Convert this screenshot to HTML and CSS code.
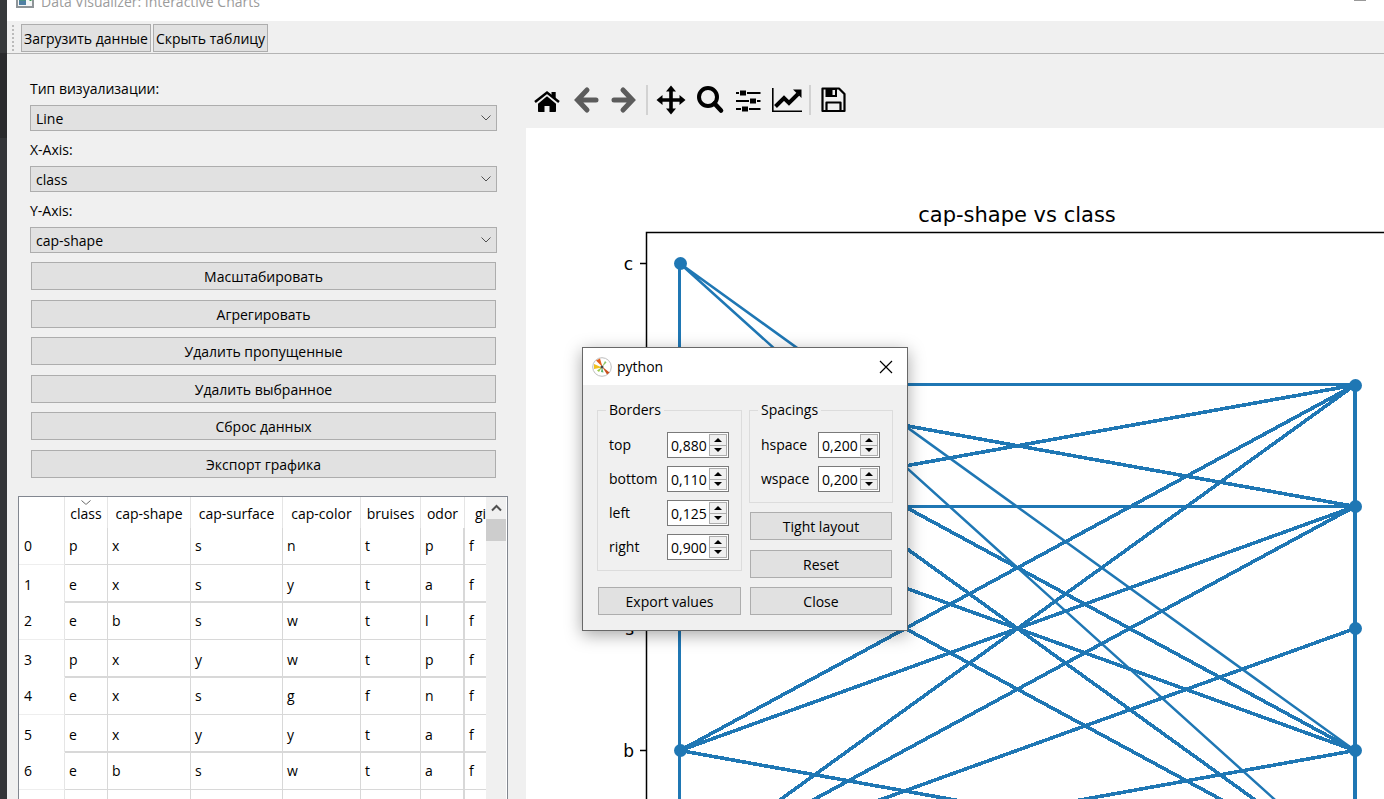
FILE: index.html
```html
<!DOCTYPE html>
<html lang="ru">
<head>
<meta charset="utf-8">
<title>Data Visualizer: Interactive Charts</title>
<link rel="stylesheet" href="styles.css">
</head>
<body>
<div class="window">
  <header class="titlebar">
    <svg class="app-icon" width="18" height="18" viewBox="0 0 18 18" aria-hidden="true"><rect x="1" y="1" width="16" height="15" fill="#f4f6f7" stroke="#8e9498" stroke-width="2"/><rect x="3" y="4" width="7" height="10" fill="#4b8f86"/><rect x="3" y="10" width="7" height="4" fill="#4f7fa3"/><path d="M14.500 5v5" stroke="#3c9a55" stroke-width="2"/></svg>
    <span class="title">Data Visualizer: Interactive Charts</span>
    <span class="minimize"></span>
  </header>
  <div class="toolbar">
    <span class="handle"></span>
    <button class="tool" type="button">Загрузить данные</button>
    <button class="tool" type="button">Скрыть таблицу</button>
  </div>
  <main class="content">
    <section class="side">
      <form class="controls">
        <label for="kind">Тип визуализации:</label>
        <div class="combo"><select id="kind"><option>Line</option></select><svg width="12" height="8" viewBox="0 0 12 8"><path d="M1.5 1.5L6 6l4.500-4.500"/></svg></div>
        <label for="xaxis">X-Axis:</label>
        <div class="combo"><select id="xaxis"><option>class</option></select><svg width="12" height="8" viewBox="0 0 12 8"><path d="M1.5 1.5L6 6l4.500-4.500"/></svg></div>
        <label for="yaxis">Y-Axis:</label>
        <div class="combo"><select id="yaxis"><option>cap-shape</option></select><svg width="12" height="8" viewBox="0 0 12 8"><path d="M1.5 1.5L6 6l4.500-4.500"/></svg></div>
        <div class="actions">
          <button class="push" type="button">Масштабировать</button>
          <button class="push" type="button">Агрегировать</button>
          <button class="push" type="button">Удалить пропущенные</button>
          <button class="push" type="button">Удалить выбранное</button>
          <button class="push" type="button">Сброс данных</button>
          <button class="push" type="button">Экспорт графика</button>
        </div>
      </form>
      <div class="grid-frame">
        <div class="grid-view">
          <table class="data">
            <colgroup><col class="c-index"><col class="c-class"><col class="c-shape"><col class="c-surface"><col class="c-color"><col class="c-bruises"><col class="c-odor"><col class="c-gill"></colgroup>
            <thead><tr><th></th><th><svg class="sort" width="10" height="5" viewBox="0 0 10 5"><path d="M.5.5l4 3.500h1l4-3.500"/></svg>class</th><th>cap-shape</th><th>cap-surface</th><th>cap-color</th><th>bruises</th><th>odor</th><th>gill-attachment</th></tr></thead>
            <tbody>
              <tr><th>0</th><td>p</td><td>x</td><td>s</td><td>n</td><td>t</td><td>p</td><td>f</td></tr>
              <tr><th>1</th><td>e</td><td>x</td><td>s</td><td>y</td><td>t</td><td>a</td><td>f</td></tr>
              <tr><th>2</th><td>e</td><td>b</td><td>s</td><td>w</td><td>t</td><td>l</td><td>f</td></tr>
              <tr><th>3</th><td>p</td><td>x</td><td>y</td><td>w</td><td>t</td><td>p</td><td>f</td></tr>
              <tr><th>4</th><td>e</td><td>x</td><td>s</td><td>g</td><td>f</td><td>n</td><td>f</td></tr>
              <tr><th>5</th><td>e</td><td>x</td><td>y</td><td>y</td><td>t</td><td>a</td><td>f</td></tr>
              <tr><th>6</th><td>e</td><td>b</td><td>s</td><td>w</td><td>t</td><td>a</td><td>f</td></tr>
              <tr><th></th><td></td><td></td><td></td><td></td><td></td><td></td><td></td></tr>
            </tbody>
          </table>
        </div>
        <div class="scrollbar">
          <button class="scroll-up" type="button" aria-label="Scroll up"><svg width="11" height="8" viewBox="0 0 11 8"><path d="M1 6.500l4.500-4.500 4.500 4.500" fill="none" stroke="#505050" stroke-width="2"/></svg></button>
          <div class="thumb"></div>
        </div>
      </div>
    </section>
    <section class="plot">
      <div class="nav">
        <button type="button" aria-label="Home"><svg width="32" height="32" viewBox="0 0 32 32"><path d="M4 18L16 8.500l12 9.500" fill="none" stroke="#000" stroke-width="2.500"/><path d="M20.500 8h4.200v7l-4.200-3.500z"/><path d="M16 12.300l9 7.500V27c0 .6-.4 1-1 1h-5.500v-6h-5v6H8c-.6 0-1-.4-1-1v-7.200z"/></svg></button>
        <button type="button" aria-label="Back"><svg width="32" height="32" viewBox="0 0 32 32"><path d="M17 6L7.500 16 17 26M8 16h18" fill="none" stroke="#5c5c5c" stroke-width="5" stroke-linecap="round"/></svg></button>
        <button type="button" aria-label="Forward"><svg width="32" height="32" viewBox="0 0 32 32"><path d="M14 6L23.500 16 14 26M23 16H5" fill="none" stroke="#5c5c5c" stroke-width="5" stroke-linecap="round"/></svg></button>
        <span class="divider"></span>
        <button type="button" aria-label="Pan"><svg width="32" height="32" viewBox="0 0 32 32"><path d="M16 5v22M5 16h22" stroke="#000" stroke-width="3.600"/><path d="M16 1.500l5 6H11zM16 30.500l5-6H11zM1.500 16l6-5v10zM30.500 16l-6-5v10z"/></svg></button>
        <button type="button" aria-label="Zoom"><svg width="32" height="32" viewBox="0 0 32 32"><circle cx="14" cy="13" r="9" fill="none" stroke="#000" stroke-width="4"/><path d="M20.500 19.500l6.500 7" stroke="#000" stroke-width="4.600" stroke-linecap="round"/></svg></button>
        <button type="button" aria-label="Subplots"><svg width="32" height="32" viewBox="0 0 32 32"><path d="M3 9h24.500M3 17h24.500M3 25h24.500" stroke="#000" stroke-width="2.200"/><path d="M6.500 6h7v6h-7zM16.500 14h7v6h-7zM8.500 22h7v6h-7z" stroke="#f0f0f0" stroke-width="1"/></svg></button>
        <button type="button" aria-label="Edit axes"><svg width="32" height="32" viewBox="0 0 32 32"><path d="M.8 4v23.200H30" fill="none" stroke="#000" stroke-width="1.600"/><path d="M3.500 22.500l8.500-8.500 5 5 9-9" fill="none" stroke="#000" stroke-width="4"/><path d="M29.500 5.500v8.500L21 5.500z"/></svg></button>
        <span class="divider"></span>
        <button type="button" aria-label="Save"><svg width="32" height="32" viewBox="0 0 32 32"><path d="M4.500 4.500H21l5.500 5.500v17h-22zM8.500 27v-8.500h14V27" fill="none" stroke="#000" stroke-width="2.200" stroke-linejoin="round"/><path d="M7.500 4h11.500v9H7.500z"/><path d="M14.500 6h2.500v5h-2.500z" fill="#f0f0f0"/></svg></button>
      </div>
      <svg class="figure" viewBox="0 0 858 671" preserveAspectRatio="xMinYMin slice" role="img" aria-label="cap-shape vs class">
        <text class="fig-title" x="491" y="94" text-anchor="middle">cap-shape vs class</text>
        <g class="fig-tick" text-anchor="end">
          <text x="107" y="142">c</text><text x="108" y="507">s</text><text x="108" y="629">b</text>
        </g>
        <path class="axes" d="M114 135.500h6M114 257.500h6M114 378.500h6M114 500.500h6M114 622.500h6M120.500 680V104.500H900"/>
        <g class="thin">
          <path d="M154 135.500L829 622.500M154 135.500L829 744"/>
        </g>
        <g class="straight">
          <path d="M153.500 135.500V744M154 256.500H829M154 378.500H829"/>
        </g>
        <g class="thick">
          <path d="M829 257V744M154 257L829 378.500M154 378.500L829 257M154 257L829 622.500M154 257L829 744M154 378.500L829 622.500M154 378.500L829 744M154 622.500L829 257M154 622.500L829 378.500M154 744L829 257M154 744L829 378.500M154 744L829 500.500M154 622.500L829 744M154 744L829 622.500"/>
        </g>
        <g class="markers">
          <circle cx="154.500" cy="135.500" r="6.500"/><circle cx="154.500" cy="257.500" r="6.500"/><circle cx="154.500" cy="378.500" r="6.500"/><circle cx="154.500" cy="622.500" r="6.500"/>
          <circle cx="829.500" cy="257.500" r="6.500"/><circle cx="829.500" cy="378.500" r="6.500"/><circle cx="829.500" cy="500.500" r="6.500"/><circle cx="829.500" cy="622.500" r="6.500"/>
        </g>
      </svg>
    </section>
  </main>
</div>

<div class="dialog" role="dialog" aria-labelledby="dialog-title">
  <div class="dialog-bar">
    <svg width="20" height="20" viewBox="0 0 20 20" aria-hidden="true"><circle cx="10" cy="10" r="9.300" fill="#fff" stroke="#bdbdbd"/><path d="M10.500 10L4 3.500l4-2z" fill="#e2601c"/><path d="M10 10.500L2 12V7z" fill="#f0c020"/><path d="M10 9.500l7.500 6-2.500 2z" fill="#c9501e"/><path d="M10 10l3-6 1.500 1.500z" fill="#8cc466"/><path d="M10 10l-3 5-2-1.500z" fill="#9ac845"/><path d="M10 10l-1 5 2.500.5z" fill="#57b46b"/><circle cx="10" cy="10" r="1.500" fill="#444"/></svg>
    <span id="dialog-title">python</span>
    <button class="close" type="button" aria-label="Close window"><svg width="14" height="14" viewBox="0 0 14 14"><path d="M1 1l12 12M13 1L1 13" stroke="#000" stroke-width="1.200"/></svg></button>
  </div>
  <form class="dialog-body">
    <div class="column">
      <fieldset><legend>Borders</legend>
        <div class="field"><label for="top">top</label><div class="spin"><input id="top" type="text" value="0,880"><span class="steps"><button type="button" aria-label="Increase top"><i class="up"></i></button><button type="button" aria-label="Decrease top"><i class="down"></i></button></span></div></div>
        <div class="field"><label for="bottom">bottom</label><div class="spin"><input id="bottom" type="text" value="0,110"><span class="steps"><button type="button" aria-label="Increase bottom"><i class="up"></i></button><button type="button" aria-label="Decrease bottom"><i class="down"></i></button></span></div></div>
        <div class="field"><label for="left">left</label><div class="spin"><input id="left" type="text" value="0,125"><span class="steps"><button type="button" aria-label="Increase left"><i class="up"></i></button><button type="button" aria-label="Decrease left"><i class="down"></i></button></span></div></div>
        <div class="field"><label for="right">right</label><div class="spin"><input id="right" type="text" value="0,900"><span class="steps"><button type="button" aria-label="Increase right"><i class="up"></i></button><button type="button" aria-label="Decrease right"><i class="down"></i></button></span></div></div>
      </fieldset>
      <button class="push" type="button">Export values</button>
    </div>
    <div class="column">
      <fieldset><legend>Spacings</legend>
        <div class="field"><label for="hspace">hspace</label><div class="spin"><input id="hspace" type="text" value="0,200"><span class="steps"><button type="button" aria-label="Increase hspace"><i class="up"></i></button><button type="button" aria-label="Decrease hspace"><i class="down"></i></button></span></div></div>
        <div class="field"><label for="wspace">wspace</label><div class="spin"><input id="wspace" type="text" value="0,200"><span class="steps"><button type="button" aria-label="Increase wspace"><i class="up"></i></button><button type="button" aria-label="Decrease wspace"><i class="down"></i></button></span></div></div>
      </fieldset>
      <button class="push" type="button">Tight layout</button>
      <button class="push" type="button">Reset</button>
      <button class="push" type="button">Close</button>
    </div>
  </form>
</div>
</body>
</html>
```
FILE: styles.css
```css
* { box-sizing: border-box; }

body {
  margin: 0;
  height: 100vh;
  overflow: hidden;
  padding-left: 7px;
  background: linear-gradient(#37393b 0 53px, #2a2b2d 53px 138px, #333538 138px);
  color: #000;
  font: 14px/20px "Open Sans", "Noto Sans", sans-serif;
}

button, input, select { margin: 0; font: inherit; color: inherit; }

.window { display: flex; flex-direction: column; height: 100%; overflow: hidden; background: #f0f0f0; }

/* Title bar and main toolbar */
.titlebar { display: flex; flex: none; gap: 7px; height: 21px; padding: 0 18px 0 9px; overflow: hidden; background: #fff; color: #9b9b9b; }
.titlebar .title { margin-top: -8px; }
.titlebar .app-icon { flex: none; margin-top: -9px; }
.minimize { width: 12px; height: 1px; margin-left: auto; background: #999; }

.toolbar { display: flex; flex: none; gap: 2px; padding: 3px 5px 1px; border-bottom: 1px solid #b4b4b4; }
.handle { width: 2px; margin: 1px 5px 1px 0; background: repeating-linear-gradient(#bbb 0 2px, transparent 2px 4px); }
.tool { height: 28px; padding: 1px 2px 0; border: 1px solid #adadad; background: #e1e1e1; white-space: nowrap; }

.content { display: grid; flex: 1; grid-template-columns: minmax(420px, 519fr) minmax(0, 858fr); min-height: 0; }

/* Left panel */
.side { display: flex; flex-direction: column; min-height: 0; padding: 25px 18px 0 11px; }
.controls { display: flex; flex: none; flex-direction: column; padding: 0 11px 0 12px; }
.controls label { margin-bottom: 6px; }
.combo { display: grid; align-items: center; margin-bottom: 9px; }
.combo select, .combo svg { grid-area: 1 / 1; }
.combo select { appearance: none; width: 100%; height: 26px; padding: 2px 5px 0; border: 1px solid #adadad; border-radius: 0; background: #e1e1e1; }
.combo svg { justify-self: end; margin-right: 5px; pointer-events: none; fill: none; stroke: #505050; }
.actions { display: flex; flex-direction: column; padding: 0 1px; }
.actions .push:nth-child(odd) { margin-bottom: 10px; }
.actions .push:nth-child(even) { margin-bottom: 9px; }
.push { height: 28px; padding: 2px 0 0; border: 1px solid #adadad; background: #e1e1e1; }

.grid-frame { display: flex; flex: 1; min-height: 0; margin-top: 9px; border: 1px solid #828790; border-bottom: 0; background: #fff; }
.grid-view { flex: 1; min-width: 0; overflow: hidden; }
.data { table-layout: fixed; width: 565px; border-collapse: separate; border-spacing: 0; }
.c-index { width: 46px; }
.c-class { width: 43px; }
.c-shape { width: 83px; }
.c-surface { width: 92px; }
.c-color { width: 78px; }
.c-bruises { width: 60px; }
.c-odor { width: 44px; }
.data th, .data td { padding: 0; border-right: 1px solid #d8d8d8; font-weight: 400; white-space: nowrap; }
.data thead th { position: relative; height: 31px; padding-top: 3px; border-color: #e5e5e5; text-align: center; }
.sort { position: absolute; top: 3px; left: 16px; fill: none; stroke: #666; }
.data td { height: 37px; padding-left: 4px; border-bottom: 1px solid #d8d8d8; }
.data tbody tr:nth-child(even) td { height: 38px; padding-top: 3px; border-bottom-width: 2px; }
.data tbody th { padding-left: 5px; border-color: #e5e5e5; border-bottom: 1px solid #eee; text-align: left; }
.data tbody tr:nth-child(even) th { padding-top: 2px; border-bottom-color: #fff; }
.data td:nth-child(7) { border-right-width: 2px; }

.scrollbar { width: 20px; margin-right: 1px; background: #f0f0f0; }
.scroll-up { display: grid; width: 100%; height: 22px; padding: 0; place-items: center; border: 0; background: none; }
.thumb { height: 22px; background: #cdcdcd; }

/* Plot panel */
.plot { display: flex; flex-direction: column; min-width: 0; min-height: 0; }
.nav { display: flex; flex: none; gap: 1px; align-items: center; height: 74px; padding: 18px 2px 0; }
.nav button { display: grid; flex: none; width: 38px; height: 38px; padding: 0; place-items: center; border: 0; background: none; }
.divider { width: 6px; height: 30px; background: linear-gradient(90deg, transparent 1px, #d2d2d2 1px 3px, transparent 3px); }
.figure { display: block; flex: 1; width: 100%; min-height: 0; background: #fff; font-family: "DejaVu Sans", sans-serif; }
.fig-title { font-size: 21px; }
.fig-tick { font-size: 17px; }
.axes { fill: none; stroke: #000; stroke-width: 1.5; }
.thin, .straight, .thick { fill: none; stroke: #1f77b4; }
.thin { stroke-width: 2.5; }
.straight { stroke-width: 3; shape-rendering: crispEdges; }
.thick { stroke-width: 3.6; shape-rendering: crispEdges; }
.markers { fill: #1f77b4; }

/* Floating subplot dialog */
.dialog { position: absolute; top: 347px; left: 582px; width: 326px; border: 1px solid #686868; background: #f0f0f0; box-shadow: 0 4px 16px rgba(0, 0, 0, .35); }
.dialog-bar { display: flex; gap: 5px; align-items: center; height: 37px; padding: 0 14px 0 9px; background: #fff; }
.close { display: grid; margin-left: auto; padding: 0; border: 0; background: none; }
.dialog-body { display: grid; grid-template-columns: 145fr 144fr; gap: 7px; padding: 15px 14px; }
.column { display: flex; flex-direction: column; gap: 9px; justify-content: space-between; min-width: 0; }
.column .push { margin: 0 1px; }
fieldset { display: grid; gap: 8px; min-width: 0; margin: 0; padding: 12px 12px 10px 11px; border: 1px solid #dcdcdc; }
legend { margin-left: -3px; padding: 0 3px; }
.field { display: flex; align-items: center; justify-content: space-between; }
.spin { display: flex; width: 62px; height: 26px; padding: 1px; border: 1px solid #7a7a7a; background: #fff; }
.spin input { flex: 1; min-width: 0; padding: 2px 0 0 2px; border: 0; outline: 0; background: none; }
.steps { display: grid; flex: none; grid-template-rows: 1fr 1fr; width: 18px; border: 1px solid #adadad; background: #adadad; gap: 1px; }
.steps button { display: grid; min-height: 0; padding: 0; place-items: center; border: 0; background: #f0f0f0; }
.up, .down { width: 0; border: 4px solid transparent; }
.up { border-top: 0; border-bottom-color: #000; }
.down { border-bottom: 0; border-top-color: #000; }
.column fieldset + .push:not(:last-child) { margin-bottom: 1px; }
```
